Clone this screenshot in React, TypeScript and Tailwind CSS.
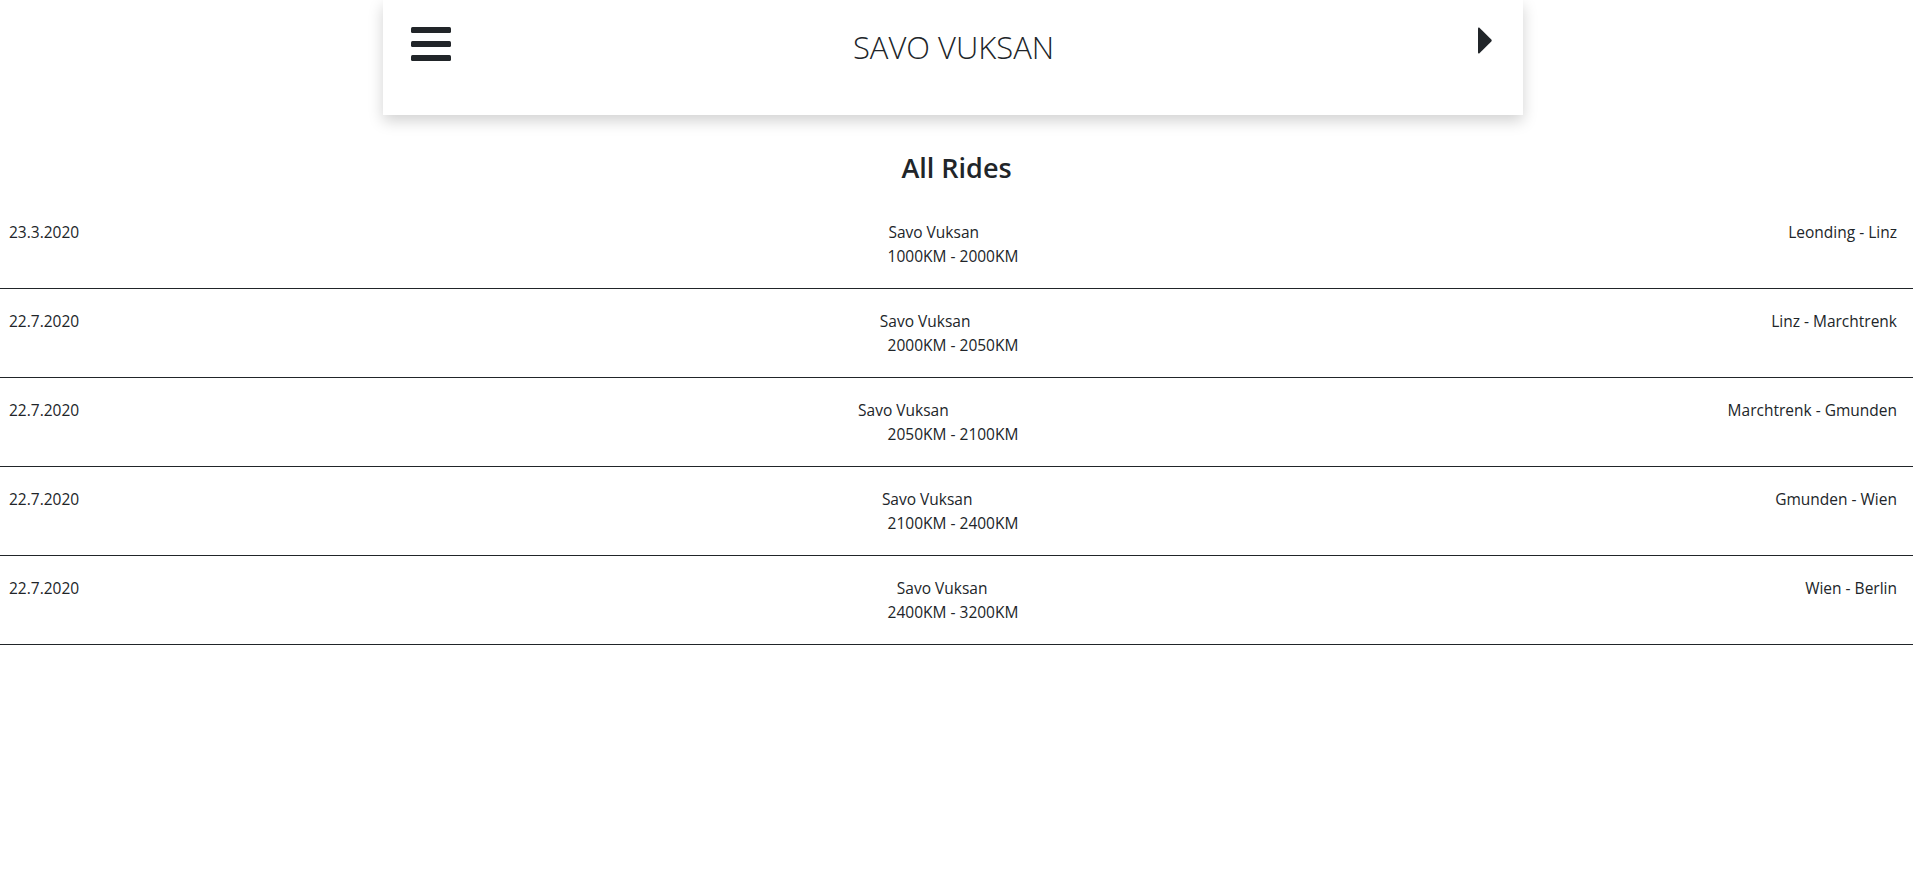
import React from "react";

const rides = [
  { date: "23.3.2020", name: "Savo Vuksan", km: "1000KM - 2000KM", route: "Leonding - Linz" },
  { date: "22.7.2020", name: "Savo Vuksan", km: "2000KM - 2050KM", route: "Linz - Marchtrenk" },
  { date: "22.7.2020", name: "Savo Vuksan", km: "2050KM - 2100KM", route: "Marchtrenk - Gmunden" },
  { date: "22.7.2020", name: "Savo Vuksan", km: "2100KM - 2400KM", route: "Gmunden - Wien" },
  { date: "22.7.2020", name: "Savo Vuksan", km: "2400KM - 3200KM", route: "Wien - Berlin" },
];

export default function App() {
  return (
    <div
      className="min-h-screen bg-white text-[#212529] text-[16px]"
      style={{ fontFamily: '"Segoe UI", "Open Sans", "Noto Sans", sans-serif' }}
    >
      <div className="w-[1140px] ml-[383px] h-[115px] bg-white shadow-[0_6px_14px_rgba(0,0,0,0.18)] flex items-start pt-[27px] pl-[28px] pr-[31px]">
        <div className="w-[80px] flex">
          <svg width="40" height="34" viewBox="0 0 40 34">
            <rect x="0" y="0" width="40" height="6" rx="1.5" fill="#212529" />
            <rect x="0" y="14" width="40" height="6" rx="1.5" fill="#212529" />
            <rect x="0" y="28" width="40" height="6" rx="1.5" fill="#212529" />
          </svg>
        </div>
        <div className="flex-1 pl-[4px] text-center text-[31px] font-light leading-[40px]">SAVO VUKSAN</div>
        <div className="w-[80px] flex justify-end">
          <svg width="14" height="27" viewBox="0 0 14 27">
            <path d="M1.2 0.6 C0.5 0.2 0 0.6 0 1.5 L0 25.5 C0 26.4 0.5 26.8 1.2 26.4 L13.3 14.4 C13.9 13.8 13.9 13.2 13.3 12.6 Z" fill="#212529" />
          </svg>
        </div>
      </div>

      <h3 className="mt-[37px] mb-[16px] text-center text-[27px] leading-[1.2] font-semibold">All Rides</h3>

      <div>
        {rides.map((r, i) => (
          <div key={i} className="border-b border-[#212529] pt-[20px] pb-[20px] pl-[9px] pr-[16px] leading-[24px] text-[15.5px]">
            <div className="flex justify-between">
              <span>{r.date}</span>
              <span>{r.name}</span>
              <span>{r.route}</span>
            </div>
            <div className="text-center">{r.km}</div>
          </div>
        ))}
      </div>
    </div>
  );
}
